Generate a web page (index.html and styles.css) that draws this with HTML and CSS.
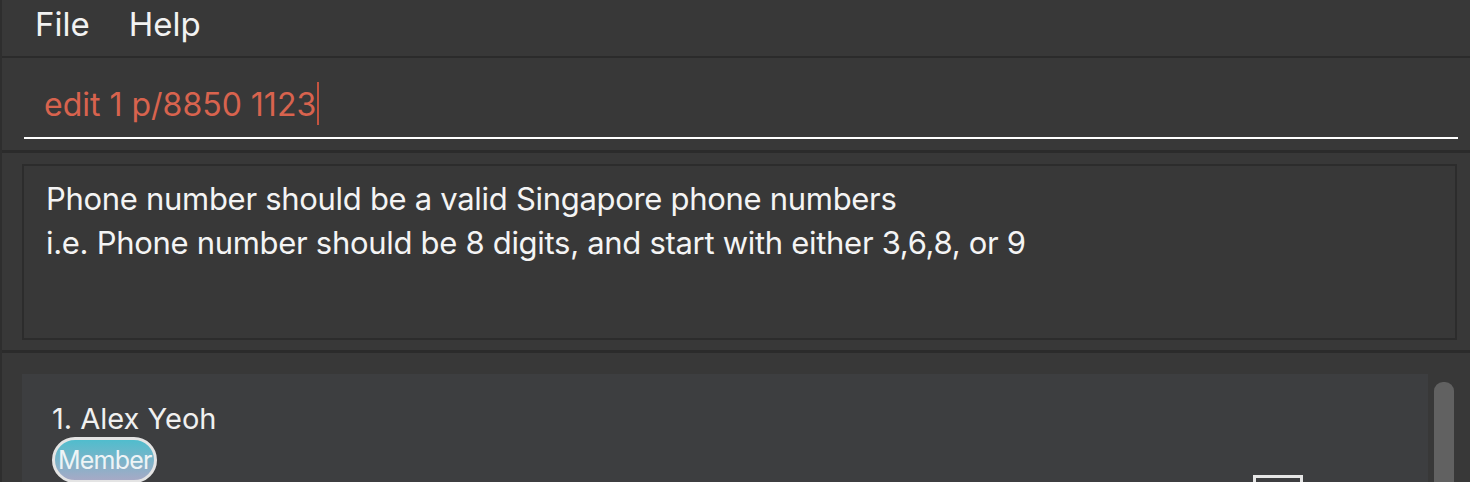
FILE: index.html
```html
<!DOCTYPE html>
<html>
<head>
<meta charset="utf-8">
<link rel="stylesheet" href="styles.css">
</head>
<body>
<div class="app">
  <div class="menubar">
    <span class="menu-item">File</span>
    <span class="menu-item">Help</span>
  </div>
  <div class="sep sep-thin"></div>
  <div class="command-panel">
    <div class="command-box">
      <span class="command-text">edit 1 p/8850 1123</span><span class="caret"></span>
    </div>
  </div>
  <div class="sep"></div>
  <div class="result-panel">
    <div class="result-box">
      <p class="result-line">Phone number should be a valid Singapore phone numbers</p>
      <p class="result-line">i.e. Phone number should be 8 digits, and start with either 3,6,8, or 9</p>
    </div>
  </div>
  <div class="sep"></div>
  <div class="list-panel">
    <div class="list">
      <div class="card">
        <div class="card-main">
          <div class="card-name">1. Alex Yeoh</div>
          <div class="tags"><span class="tag">Member</span></div>
        </div>
        <div class="checkbox"></div>
      </div>
    </div>
    <div class="scrollbar"><div class="thumb"></div></div>
  </div>
</div>
</body>
</html>
```
FILE: styles.css
```css
* { box-sizing: border-box; }
html, body { margin: 0; padding: 0; background: #383838; overflow: hidden; }
body { font-family: Inter, "Noto Sans", sans-serif; color: #f0f0f0; }
.app { width: 1470px; height: 482px; border-left: 2px solid #2e2e2e; display: flex; flex-direction: column; overflow: hidden; }
.app > * { flex: none; }
.menubar { height: 56px; display: flex; align-items: flex-start; padding: 8px 0 0 33px; gap: 39px; background: #383838; }
.menu-item { font-size: 33px; line-height: 33px; color: #f2f2f2; }
.sep { height: 3px; background: #2b2b2b; }
.sep-thin { height: 2px; }
.command-panel { height: 92px; padding: 0 12px 11px 22px; }
.command-box { height: 81px; border-bottom: 2px solid #ffffff; display: flex; align-items: flex-start; padding-left: 20px; }
.command-text { font-size: 32px; line-height: 32px; margin-top: 31px; color: #d8634e; letter-spacing: 0; }
.caret { width: 2px; height: 43px; margin-top: 24px; background: #c4533f; margin-left: 1px; }
.result-panel { height: 197px; padding: 11px 13px 10px 20px; }
.result-box { height: 176px; border: 2px solid #2c2c2c; padding: 11px 22px; }
.result-line { margin: 0; font-size: 31px; line-height: 44px; color: #f4f4f4; letter-spacing: -0.3px; }
.list-panel { height: 140px; display: flex; padding: 21px 16px 0 20px; gap: 6px; }
.list { flex: 1; }
.card { background: #3d3e40; height: 200px; display: flex; justify-content: space-between; align-items: flex-start; padding: 27px 0 0 30px; }
.card-name { font-size: 29px; line-height: 35px; color: #f0f0f0; }
.tags { margin-top: 1px; }
.tag { display: inline-block; font-size: 25px; line-height: 40px; padding: 0 2px 0 3px; border: 3px solid #e4e4e4; border-radius: 23px; background: linear-gradient(#50bdcd 0%, #7ab4c9 50%, #a6aac6 100%); color: #eef4f6; letter-spacing: -0.8px; }
.checkbox { flex: none; width: 50px; height: 50px; border: 3px solid #e6e6e6; margin: 74px 125px 0 0; }
.scrollbar { width: 20px; padding-top: 8px; }
.thumb { background: #616161; height: 200px; border-radius: 9px; }
```
